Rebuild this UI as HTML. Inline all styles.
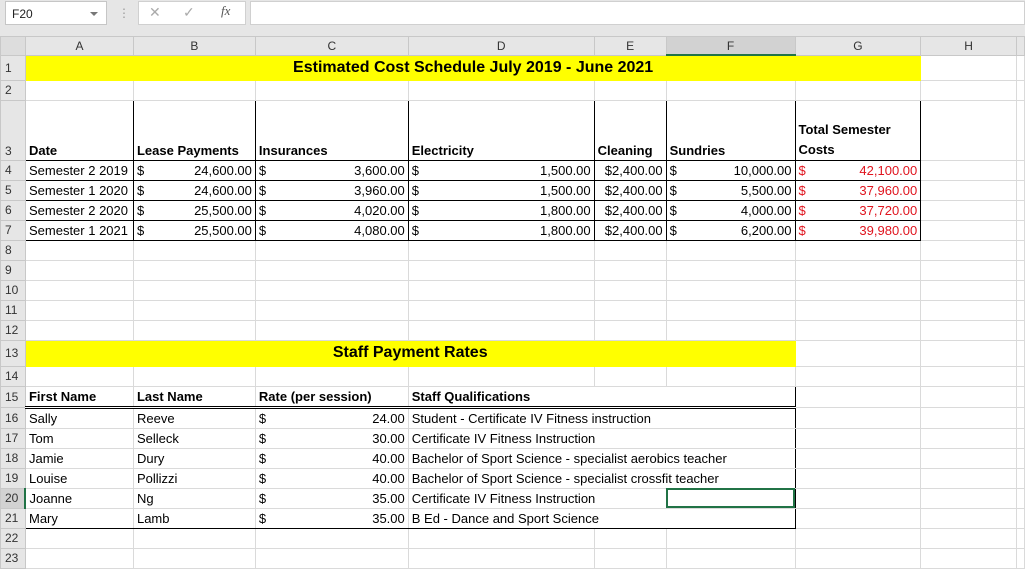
<!DOCTYPE html>
<html><head><style>
body{margin:0;width:1025px;height:555px;overflow:hidden;background:#fff;font-family:"Liberation Sans",Arial,sans-serif;position:relative}
.top{position:absolute;left:0;top:0;width:1025px;height:36px;background:#e6e6e6}
.nb{position:absolute;left:5px;top:1px;width:102px;height:24px;background:#fff;border:1px solid #c6c6c6;font-size:12px;line-height:24px;padding-left:6px;box-sizing:border-box;color:#222}
.nb:after{content:"";position:absolute;right:8px;top:10px;border:4px solid transparent;border-top:4px solid #777}
.ic{position:absolute;left:138px;top:1px;width:108px;height:24px;background:#fff;border:1px solid #d0d0d0;box-sizing:border-box;color:#aaa;font-size:14px}
.fb{position:absolute;left:250px;top:1px;width:775px;height:24px;background:#fff;border:1px solid #d0d0d0;box-sizing:border-box}
table{position:absolute;left:0;top:36px;border-collapse:collapse;table-layout:fixed;font-size:13px;color:#000}
td{border:1px solid #dadada;padding:0 3px;height:19px;line-height:18px;vertical-align:bottom;white-space:nowrap;overflow:hidden}
td.h{background:#e6e6e6;color:#333;text-align:center;vertical-align:middle;border-color:#c8c8c8;font-size:12px;height:17px;line-height:16px}
td.r{background:#e6e6e6;color:#333;text-align:left;padding-left:4px;border-color:#c8c8c8;font-size:12px;vertical-align:middle}
.b{font-weight:bold}
.y{background:#ff0}
.k{border:1px solid #000}
.rt{text-align:right}
.red{color:#e0141e}
.m span{float:right}
.bt{border-top:1px solid #000}
.bb{border-bottom:3px double #000}
.bk{border-bottom:1px solid #000}
.br{border-right:1px solid #000}
</style></head><body>
<div class="top">
<div class="nb">F20</div>
<div style="position:absolute;left:118px;top:6px;color:#999;font-size:12px">⋮</div>
<div class="ic"><span style="position:absolute;left:10px;top:2px">✕</span><span style="position:absolute;left:44px;top:2px">✓</span><span style="position:absolute;left:82px;top:1px;font-family:'Liberation Serif',serif;font-style:italic;color:#555;font-size:13px">fx</span></div>
<div class="fb"></div>
</div>
<table>
<colgroup><col style="width:25px"><col style="width:108px"><col style="width:122px"><col style="width:153px"><col style="width:186px"><col style="width:72px"><col style="width:129px"><col style="width:126px"><col style="width:96px"><col style="width:8px"></colgroup>
<tr><td class="h" style="background:#ddd"></td><td class="h">A</td><td class="h">B</td><td class="h">C</td><td class="h">D</td><td class="h">E</td><td class="h" style="background:#d2d2d2;border-bottom:2px solid #217346">F</td><td class="h">G</td><td class="h">H</td><td class="h"></td></tr>
<tr style="height:25px"><td class="r">1</td><td colspan="7" class="y b" style="text-align:center;font-size:16px;vertical-align:middle;border-color:#ff0">Estimated Cost Schedule July 2019 - June 2021</td><td></td><td></td></tr>
<tr style="height:20px"><td class="r">2</td><td></td><td></td><td></td><td></td><td></td><td></td><td></td><td></td><td></td></tr>
<tr style="height:60px"><td class="r" style="vertical-align:bottom">3</td><td class="k b">Date</td><td class="k b">Lease Payments</td><td class="k b">Insurances</td><td class="k b">Electricity</td><td class="k b">Cleaning</td><td class="k b">Sundries</td><td class="k b" style="white-space:normal;line-height:20px">Total Semester Costs</td><td></td><td></td></tr>
<tr style="height:20px"><td class="r">4</td><td class="k">Semester 2 2019</td><td class="k m">$<span>24,600.00</span></td><td class="k m">$<span>3,600.00</span></td><td class="k m">$<span>1,500.00</span></td><td class="k rt">$2,400.00</td><td class="k m">$<span>10,000.00</span></td><td class="k m red">$<span>42,100.00</span></td><td></td><td></td></tr>
<tr style="height:20px"><td class="r">5</td><td class="k">Semester 1 2020</td><td class="k m">$<span>24,600.00</span></td><td class="k m">$<span>3,960.00</span></td><td class="k m">$<span>1,500.00</span></td><td class="k rt">$2,400.00</td><td class="k m">$<span>5,500.00</span></td><td class="k m red">$<span>37,960.00</span></td><td></td><td></td></tr>
<tr style="height:20px"><td class="r">6</td><td class="k">Semester 2 2020</td><td class="k m">$<span>25,500.00</span></td><td class="k m">$<span>4,020.00</span></td><td class="k m">$<span>1,800.00</span></td><td class="k rt">$2,400.00</td><td class="k m">$<span>4,000.00</span></td><td class="k m red">$<span>37,720.00</span></td><td></td><td></td></tr>
<tr style="height:20px"><td class="r">7</td><td class="k">Semester 1 2021</td><td class="k m">$<span>25,500.00</span></td><td class="k m">$<span>4,080.00</span></td><td class="k m">$<span>1,800.00</span></td><td class="k rt">$2,400.00</td><td class="k m">$<span>6,200.00</span></td><td class="k m red">$<span>39,980.00</span></td><td></td><td></td></tr>
<tr style="height:20px"><td class="r">8</td><td></td><td></td><td></td><td></td><td></td><td></td><td></td><td></td><td></td></tr>
<tr style="height:20px"><td class="r">9</td><td></td><td></td><td></td><td></td><td></td><td></td><td></td><td></td><td></td></tr>
<tr style="height:20px"><td class="r">10</td><td></td><td></td><td></td><td></td><td></td><td></td><td></td><td></td><td></td></tr>
<tr style="height:20px"><td class="r">11</td><td></td><td></td><td></td><td></td><td></td><td></td><td></td><td></td><td></td></tr>
<tr style="height:20px"><td class="r">12</td><td></td><td></td><td></td><td></td><td></td><td></td><td></td><td></td><td></td></tr>
<tr style="height:26px"><td class="r">13</td><td colspan="6" class="y b" style="text-align:center;font-size:16px;vertical-align:middle;border-color:#ff0">Staff Payment Rates</td><td></td><td></td><td></td></tr>
<tr style="height:20px"><td class="r">14</td><td></td><td></td><td></td><td></td><td></td><td></td><td></td><td></td><td></td></tr>
<tr style="height:21px"><td class="r">15</td><td class="b bt bb">First Name</td><td class="b bt bb">Last Name</td><td class="b bt bb">Rate (per session)</td><td class="b bt bb" colspan="3" style="border-right:1px solid #000">Staff Qualifications</td><td></td><td></td><td></td></tr>
<tr style="height:20px"><td class="r">16</td><td>Sally</td><td>Reeve</td><td class="m">$<span>24.00</span></td><td colspan="3" class="br">Student - Certificate IV Fitness instruction</td><td></td><td></td><td></td></tr>
<tr style="height:20px"><td class="r">17</td><td>Tom</td><td>Selleck</td><td class="m">$<span>30.00</span></td><td colspan="3" class="br">Certificate IV Fitness Instruction</td><td></td><td></td><td></td></tr>
<tr style="height:20px"><td class="r">18</td><td>Jamie</td><td>Dury</td><td class="m">$<span>40.00</span></td><td colspan="3" class="br">Bachelor of Sport Science - specialist aerobics teacher</td><td></td><td></td><td></td></tr>
<tr style="height:20px"><td class="r">19</td><td>Louise</td><td>Pollizzi</td><td class="m">$<span>40.00</span></td><td colspan="3" class="br">Bachelor of Sport Science - specialist crossfit teacher</td><td></td><td></td><td></td></tr>
<tr style="height:20px"><td class="r" style="background:#d2d2d2;border-right:2px solid #217346">20</td><td>Joanne</td><td>Ng</td><td class="m">$<span>35.00</span></td><td colspan="2" style="overflow:visible">Certificate IV Fitness Instruction</td><td class="br" style="outline:2px solid #217346;outline-offset:-2px"></td><td></td><td></td><td></td></tr>
<tr style="height:20px"><td class="r">21</td><td class="bk">Mary</td><td class="bk">Lamb</td><td class="m bk">$<span>35.00</span></td><td colspan="3" class="br bk">B Ed - Dance and Sport Science</td><td></td><td></td><td></td></tr>
<tr style="height:20px"><td class="r">22</td><td></td><td></td><td></td><td></td><td></td><td></td><td></td><td></td><td></td></tr>
<tr style="height:20px"><td class="r">23</td><td></td><td></td><td></td><td></td><td></td><td></td><td></td><td></td><td></td></tr>
</table>
</body></html>
